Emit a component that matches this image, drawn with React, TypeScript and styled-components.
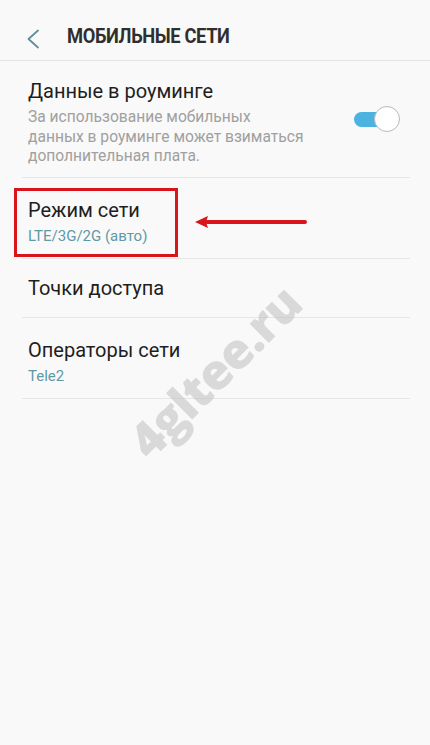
import React from "react";
import styled, { createGlobalStyle } from "styled-components";

const Global = createGlobalStyle`
  html, body { margin: 0; padding: 0; background: #f9f9f9; }
  body { font-family: Roboto, "Noto Sans", sans-serif; }
`;

const Page = styled.div`
  position: relative;
  width: 430px;
  height: 745px;
  background: #f9f9f9;
  overflow: hidden;
`;

const Header = styled.header`
  height: 61px;
  display: flex;
  align-items: center;
  border-bottom: 1px solid #e4e4e4;
  box-sizing: border-box;
  padding: 12px 0 0 24px;
  gap: 27px;
`;

const BackButton = styled.button`
  border: none;
  background: none;
  padding: 0;
  width: 16px;
  height: 22px;
  display: flex;
  align-items: center;
  justify-content: center;
  margin-top: 5px;
`;

const Title = styled.h1`
  margin: 0;
  font-family: Roboto, sans-serif;
  font-weight: 700;
  font-size: 20px;
  letter-spacing: -0.4px;
  color: #2f2f2f;
  transform: scaleX(0.915);
  transform-origin: left center;
`;

const List = styled.div`
  margin: 0 20px 0 22px;
  display: flex;
  flex-direction: column;
`;

const Item = styled.div<{ $h: number; $top?: number; $center?: boolean }>`
  height: ${(p) => p.$h}px;
  box-sizing: border-box;
  display: flex;
  align-items: ${(p) => (p.$center ? "center" : "flex-start")};
  padding: ${(p) => (p.$center ? 0 : p.$top ?? 18)}px 10px 0 6px;
  border-bottom: 1px solid #e6e6e6;
`;

const ItemText = styled.div`
  flex: 1;
  display: flex;
  flex-direction: column;
`;

const ItemTitle = styled.div`
  font-size: 20px;
  line-height: 24px;
  color: #1e1e1e;
`;

const ItemSub = styled.div<{ $accent?: boolean }>`
  font-size: ${(p) => (p.$accent ? 15 : 15.6)}px;
  line-height: ${(p) => (p.$accent ? 20 : 19.5)}px;
  color: ${(p) => (p.$accent ? "#5e9aa6" : "#a0a0a0")};
  margin-top: ${(p) => (p.$accent ? 4 : 5)}px;
`;

const Toggle = styled.div`
  position: relative;
  align-self: center;
  width: 46px;
  height: 26px;
  display: flex;
  align-items: center;
  margin-top: -18px;
`;

const Track = styled.div`
  width: 44px;
  height: 15px;
  border-radius: 8px;
  background: #4cb3e0;
`;

const Knob = styled.div`
  position: absolute;
  right: 0;
  top: 0;
  width: 24px;
  height: 24px;
  border-radius: 50%;
  background: #fff;
  border: 1px solid #b9b9b9;
`;

const Highlight = styled.div`
  position: absolute;
  left: 14px;
  top: 188px;
  width: 164px;
  height: 69px;
  box-sizing: border-box;
  border: 3px solid #d8141c;
`;

const Arrow = styled.svg`
  position: absolute;
  left: 193px;
  top: 214px;
`;

const Watermark = styled.div`
  position: absolute;
  left: 214px;
  top: 371px;
  transform: translate(-50%, -50%) rotate(-45deg);
  font-family: "Open Sans", Roboto, sans-serif;
  font-weight: 800;
  font-size: 49px;
  letter-spacing: -1px;
  color: rgba(185, 185, 185, 0.5);
  white-space: nowrap;
  pointer-events: none;
`;

export default function App() {
  return (
    <Page>
      <Global />
      <Header>
        <BackButton aria-label="Назад">
          <svg width="15" height="20" viewBox="0 0 15 20">
            <path d="M13 1.5 L3.5 10 L13 18.5" fill="none" stroke="#5f9098" strokeWidth="1.8" strokeLinecap="round" strokeLinejoin="round" />
          </svg>
        </BackButton>
        <Title>МОБИЛЬНЫЕ СЕТИ</Title>
      </Header>
      <List>
        <Item $h={117}>
          <ItemText>
            <ItemTitle>Данные в роуминге</ItemTitle>
            <ItemSub>
              За использование мобильных
              <br />
              данных в роуминге может взиматься
              <br />
              дополнительная плата.
            </ItemSub>
          </ItemText>
          <Toggle>
            <Track />
            <Knob />
          </Toggle>
        </Item>
        <Item $h={81} $top={20}>
          <ItemText>
            <ItemTitle>Режим сети</ItemTitle>
            <ItemSub $accent>LTE/3G/2G (авто)</ItemSub>
          </ItemText>
        </Item>
        <Item $h={59} $center>
          <ItemText>
            <ItemTitle>Точки доступа</ItemTitle>
          </ItemText>
        </Item>
        <Item $h={81} $top={20}>
          <ItemText>
            <ItemTitle>Операторы сети</ItemTitle>
            <ItemSub $accent>Tele2</ItemSub>
          </ItemText>
        </Item>
      </List>
      <Highlight />
      <Arrow width="116" height="16" viewBox="0 0 116 16">
        <path d="M14 8 L112 8" stroke="#d8141c" strokeWidth="4" strokeLinecap="round" />
        <path d="M2 8 L15 2 L13 8 L15 14 Z" fill="#d8141c" />
      </Arrow>
      <Watermark>4gltee.ru</Watermark>
    </Page>
  );
}
